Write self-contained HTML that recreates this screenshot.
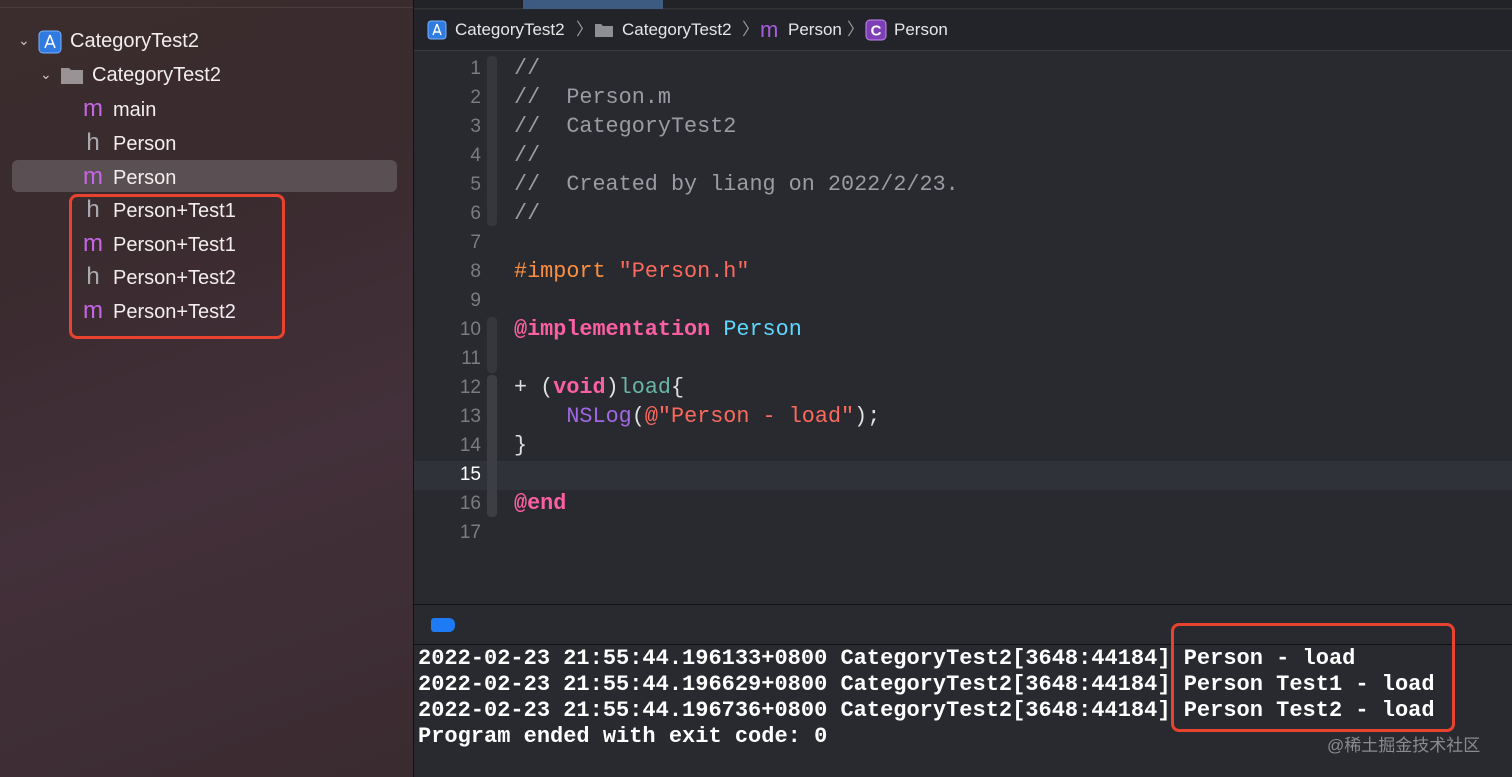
<!DOCTYPE html>
<html><head><meta charset="utf-8"><style>
*{margin:0;padding:0;box-sizing:border-box}
body{width:1512px;height:777px;overflow:hidden;background:#292a30;position:relative;font-family:"Liberation Sans",sans-serif}
#side{position:absolute;left:0;top:0;width:413px;height:777px;background:linear-gradient(160deg,#3b2c2e 0%,#3a2b2f 30%,#43303a 60%,#3a2b30 100%);}
#side .top{position:absolute;left:0;top:0;width:413px;height:8px;border-bottom:1px solid #4a3d3f}
.row{position:absolute;height:33px;line-height:33px;color:#f3eded;font-size:20px;white-space:nowrap}
.ic{display:inline-block;width:28px;text-align:center;font-size:24px;margin-right:6px}
.m{color:#c666e6}.h{color:#a9acb0}
#sel{position:absolute;left:12px;top:160px;width:385px;height:32px;background:#5a4f52;border-radius:6px}
.chev{position:absolute;color:#cfc6c6;font-size:14px}
.red{position:absolute;border:3px solid #e8432e;border-radius:8px}
#vdiv{position:absolute;left:413px;top:0;width:1px;height:777px;background:#111}
#tabs{position:absolute;left:414px;top:0;right:0;height:9px;background:#222327;border-bottom:1px solid #333}
#tabs div{position:absolute;left:109px;top:0;width:140px;height:9px;background:#3d5a80}
#crumb{position:absolute;left:414px;top:10px;right:0;height:41px;background:#232429;border-bottom:1px solid #3a3b40;color:#e6e6e8;font-size:17px;line-height:39px;white-space:nowrap}
#crumb span{position:absolute}
.code{position:absolute;left:514px;font-family:"Liberation Mono",monospace;font-size:21.8px;white-space:pre;color:#dfdfe0;line-height:29px}
.ln{position:absolute;left:414px;width:67px;text-align:right;font-family:"Liberation Sans",sans-serif;font-size:19px;color:#7b7c82;line-height:29px}
.c{color:#9a9ca2}.kw{color:#fc5fa3;font-weight:bold}.str{color:#fc6a5d}.pp{color:#fd8f3f}.ty{color:#5dd8ff}.fn{color:#67b7a4}.nl{color:#a167e6}
#con{position:absolute;left:414px;top:604px;right:0;bottom:0;background:#292a30;border-top:1px solid #111}
#conbar{position:absolute;left:414px;top:604px;right:0;height:41px;border-bottom:1px solid #111}
.cl{position:absolute;left:418px;font-family:"Liberation Mono",monospace;font-weight:bold;font-size:22px;color:#fff;white-space:pre;line-height:26px}
</style></head><body>
<div id="side"><div class="top"></div></div>
<div id="sel"></div>
<span class="chev" style="left:18px;top:32px">&#8964;</span>
<svg style="position:absolute;left:38px;top:30px" width="24" height="24"><rect x="1" y="1" width="22" height="22" rx="4" fill="#2f7be0" stroke="#7ab0ff"/><path d="M12 5 L7 18 M12 5 L17 18 M8 14 H16" stroke="#fff" stroke-width="1.6" fill="none"/></svg>
<div class="row" style="left:70px;top:25px">CategoryTest2</div>
<span class="chev" style="left:40px;top:66px">&#8964;</span>
<svg style="position:absolute;left:60px;top:65px" width="24" height="20"><path d="M1 3 h8 l2 2 h12 v14 h-22z" fill="#9a9396"/></svg>
<div class="row" style="left:92px;top:59px">CategoryTest2</div>
<div class="row" style="left:79px;top:92px"><span class="ic m">m</span>main</div>
<div class="row" style="left:79px;top:126px"><span class="ic h">h</span>Person</div>
<div class="row" style="left:79px;top:160px"><span class="ic m">m</span>Person</div>
<div class="row" style="left:79px;top:193px"><span class="ic h">h</span>Person+Test1</div>
<div class="row" style="left:79px;top:227px"><span class="ic m">m</span>Person+Test1</div>
<div class="row" style="left:79px;top:260px"><span class="ic h">h</span>Person+Test2</div>
<div class="row" style="left:79px;top:294px"><span class="ic m">m</span>Person+Test2</div>
<div class="red" style="left:69px;top:194px;width:216px;height:145px"></div>
<div id="vdiv"></div>
<div id="tabs"><div></div></div>
<div id="crumb">
<svg style="position:absolute;left:13px;top:10px" width="20" height="20"><rect x="1" y="1" width="18" height="18" rx="3" fill="#2f7be0" stroke="#7ab0ff"/><path d="M10 4 L6 15 M10 4 L14 15 M7 12 H13" stroke="#fff" stroke-width="1.4" fill="none"/></svg>
<span style="left:41px">CategoryTest2</span><span style="left:162px;color:#999">&#12297;</span>
<svg style="position:absolute;left:180px;top:12px" width="20" height="16"><path d="M1 2 h6 l2 2 h10 v11 h-18z" fill="#8e8f93"/></svg>
<span style="left:208px">CategoryTest2</span><span style="left:328px;color:#999">&#12297;</span>
<span style="left:346px;color:#a65ee0;font-size:22px">m</span><span style="left:374px">Person</span><span style="left:433px;color:#999">&#12297;</span>
<svg style="position:absolute;left:451px;top:9px" width="22" height="22"><rect x="1" y="1" width="20" height="20" rx="4" fill="#7d3fb5" stroke="#c58af0"/><text x="11" y="16.5" text-anchor="middle" fill="#fff" font-size="15" font-weight="bold" font-family="Liberation Sans">C</text></svg>
<span style="left:480px">Person</span>
</div>
<div style="position:absolute;left:414px;top:461px;right:0;height:29px;background:#2f3239"></div>
<div style="position:absolute;left:487px;top:56px;width:10px;height:170px;background:#36373d;border-radius:4px"></div>
<div style="position:absolute;left:487px;top:317px;width:10px;height:56px;background:#36373d;border-radius:4px"></div>
<div style="position:absolute;left:487px;top:375px;width:10px;height:142px;background:#3d3e44;border-radius:4px"></div>
<div class="ln" style="top:54px">1<br>2<br>3<br>4<br>5<br>6<br>7<br>8<br>9<br>10<br>11<br>12<br>13<br>14<br><span style="color:#fff">15</span><br>16<br>17</div>
<div class="code" style="top:54px"><span class="c">//
//  Person.m
//  CategoryTest2
//
//  Created by liang on 2022/2/23.
//</span>

<span class="pp">#import</span> <span class="str">"Person.h"</span>

<span class="kw">@implementation</span> <span class="ty">Person</span>

+ (<span class="kw">void</span>)<span class="fn">load</span>{
    <span class="nl">NSLog</span>(<span class="str">@"Person - load"</span>);
}

<span class="kw">@end</span>
</div>
<div id="con"></div>
<div id="conbar"></div>
<div style="position:absolute;left:431px;top:618px;width:24px;height:14px;background:#1e7bf5;border-radius:3px 6px 6px 3px"></div>
<div class="cl" style="top:646px">2022-02-23 21:55:44.196133+0800 CategoryTest2[3648:44184] Person - load
2022-02-23 21:55:44.196629+0800 CategoryTest2[3648:44184] Person Test1 - load
2022-02-23 21:55:44.196736+0800 CategoryTest2[3648:44184] Person Test2 - load
Program ended with exit code: 0</div>
<div class="red" style="left:1171px;top:623px;width:284px;height:109px"></div>
<div style="position:absolute;left:1327px;top:731px;color:#8a8b90;font-size:17px;font-family:'Liberation Sans','Noto Sans CJK SC',sans-serif">@稀土掘金技术社区</div>
</body></html>
